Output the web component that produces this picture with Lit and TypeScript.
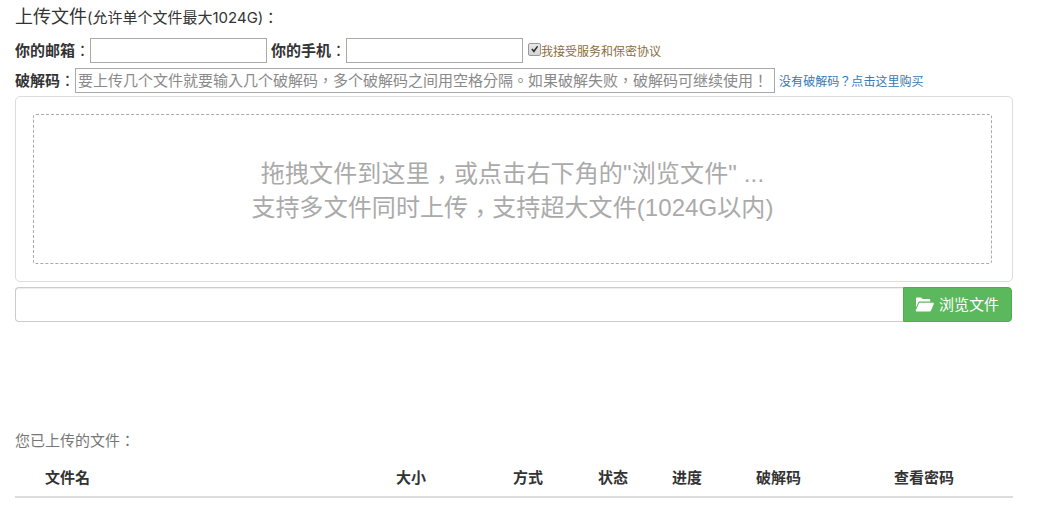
import { LitElement, html, css, unsafeCSS } from "lit";
import { customElement } from "lit/decorators.js";

const COLS = ["文件名", "大小", "方式", "状态", "进度", "破解码", "查看密码"];
const CHECK = unsafeCSS(`url("data:image/svg+xml,%3Csvg xmlns='http://www.w3.org/2000/svg' viewBox='0 0 13 13'%3E%3Cpath d='M2.6 6.6l1.6-1.4 1.5 1.9L9.6 2.2l1.2 1-4.9 7.2z' fill='%23333'/%3E%3C/svg%3E")`);

@customElement("app-root")
export class AppRoot extends LitElement {
  static styles = css`
    :host {
      display: block;
      width: 1039px;
      height: 506px;
      overflow: hidden;
      background: #fff;
      box-sizing: border-box;
      padding: 0 26px 0 15px;
      color: #333;
      font: 15px/20px "Liberation Sans", "Noto Sans CJK TC", sans-serif;
      text-spacing-trim: space-all;
    }
    .title { height: 38px; padding-top: 5px; box-sizing: border-box; line-height: 24px; white-space: nowrap; font-family: Inter, "Noto Sans CJK TC", sans-serif; }
    .title b { font-weight: 400; font-size: 18px; }
    .row { display: flex; align-items: center; white-space: nowrap; height: 25px; }
    .row.r2 { margin-top: 5px; }
    label { display: inline-flex; }
    label b { font-weight: 700; }
    input.plain {
      box-sizing: border-box; height: 25px; width: 177px; margin: 0;
      border: 1px solid #a9a9a9; padding: 1px 2px; background: #fff; outline: none;
      font: 15px "Liberation Sans", "Noto Sans CJK TC", sans-serif; color: #333;
      text-spacing-trim: space-all;
    }
    input.plain::placeholder { color: #8a8a8a; opacity: 1; }
    input.code { width: 700px; }
    .gap { margin-left: 4px; }
    .agree { display: flex; align-items: center; margin-left: 5px; font-size: 12px; color: #8a6d3b; }
    .agree span { padding-top: 3px; }
    .agree input {
      appearance: none; box-sizing: border-box; width: 13px; height: 13px; margin: 0 0 3px 0;
      border: 1px solid #999; border-radius: 2px;
      background: linear-gradient(#e8e8e8, #d4d4d4);
    }
    .agree input:checked { background: ${CHECK}, linear-gradient(#e8e8e8, #d4d4d4); }
    .buy { margin-left: 4px; padding-top: 2px; font-size: 12px; color: #337ab7; text-decoration: none; letter-spacing: .05px; }
    .panel {
      box-sizing: border-box; height: 186px; margin-top: 3px; padding: 17px 20px 17px 17px;
      border: 1px solid #ddd; border-radius: 5px;
    }
    .drop {
      box-sizing: border-box; height: 100%; display: flex; flex-direction: column;
      align-items: center; justify-content: center; padding-top: 3px;
      border: 1px dashed #aaa; border-radius: 3px;
      color: #aaa; font-size: 24px; line-height: 34px; white-space: nowrap;
    }
    .l1 { letter-spacing: .15px; }
    .l2 { letter-spacing: .08px; }
    .comma { display: inline-block; transform: translateY(.24em); }
    .browse { display: flex; height: 35px; margin-top: 5px; width: 997px; }
    .caption {
      flex: 1; box-sizing: border-box; border: 1px solid #ccc; border-right: 0;
      border-radius: 4px 0 0 4px; box-shadow: inset 0 1px 1px rgba(0,0,0,.075);
    }
    .btn {
      box-sizing: border-box; width: 109px; display: flex; align-items: center; gap: 5px;
      padding-left: 11px; background: #5cb85c; border: 1px solid #4cae4c;
      border-radius: 0 4px 4px 0; color: #fff; white-space: nowrap;
    }
    .btn svg { width: 19px; height: 15px; fill: #fff; flex: none; }
    .uploaded { margin-top: 109px; color: #777; }
    .thead {
      display: grid; grid-template-columns: 351px 117px 85px 74px 84px 138px 1fr;
      padding: 17px 0 8px 30px; border-bottom: 2px solid #ddd; font-weight: 700;
    }
  `;

  render() {
    return html`
      <div class="title"><b>上传文件</b>(允许单个文件最大1024G)：</div>
      <div class="row">
        <label><b>你的邮箱</b>：</label><input class="plain" type="text" />
        <label class="gap"><b>你的手机</b>：</label><input class="plain" type="text" />
        <div class="agree"><input type="checkbox" checked /><span>我接受服务和保密协议</span></div>
      </div>
      <div class="row r2">
        <label><b>破解码</b>：</label>
        <input class="plain code" type="text" placeholder="要上传几个文件就要输入几个破解码，多个破解码之间用空格分隔。如果破解失败，破解码可继续使用！" />
        <a class="buy" href="#">没有破解码？点击这里购买</a>
      </div>
      <div class="panel">
        <div class="drop">
          <div class="l1">拖拽文件到这里<span class="comma">，</span>或点击右下角的"浏览文件" ...</div>
          <div class="l2">支持多文件同时上传<span class="comma">，</span>支持超大文件(1024G以内)</div>
        </div>
      </div>
      <div class="browse">
        <div class="caption"></div>
        <div class="btn">
          <svg viewBox="0 0 19 15"><path d="M1 1.5C1 .9 1.5.5 2 .5h4.2l1.3 1.6h6.7c.6 0 1 .4 1 1v1.4H5.2c-1 0-1.8.5-2.2 1.4L1 10.5V1.5zM5 5.8h13c.6 0 1 .6.8 1.1l-2.9 6.9c-.2.5-.6.7-1.1.7H1.6c-.6 0-1-.6-.8-1.1l3.1-6.9c.2-.4.6-.7 1.1-.7z"/></svg>
          <span>浏览文件</span>
        </div>
      </div>
      <div class="uploaded">您已上传的文件：</div>
      <div class="thead">${COLS.map((c) => html`<div>${c}</div>`)}</div>
    `;
  }
}
